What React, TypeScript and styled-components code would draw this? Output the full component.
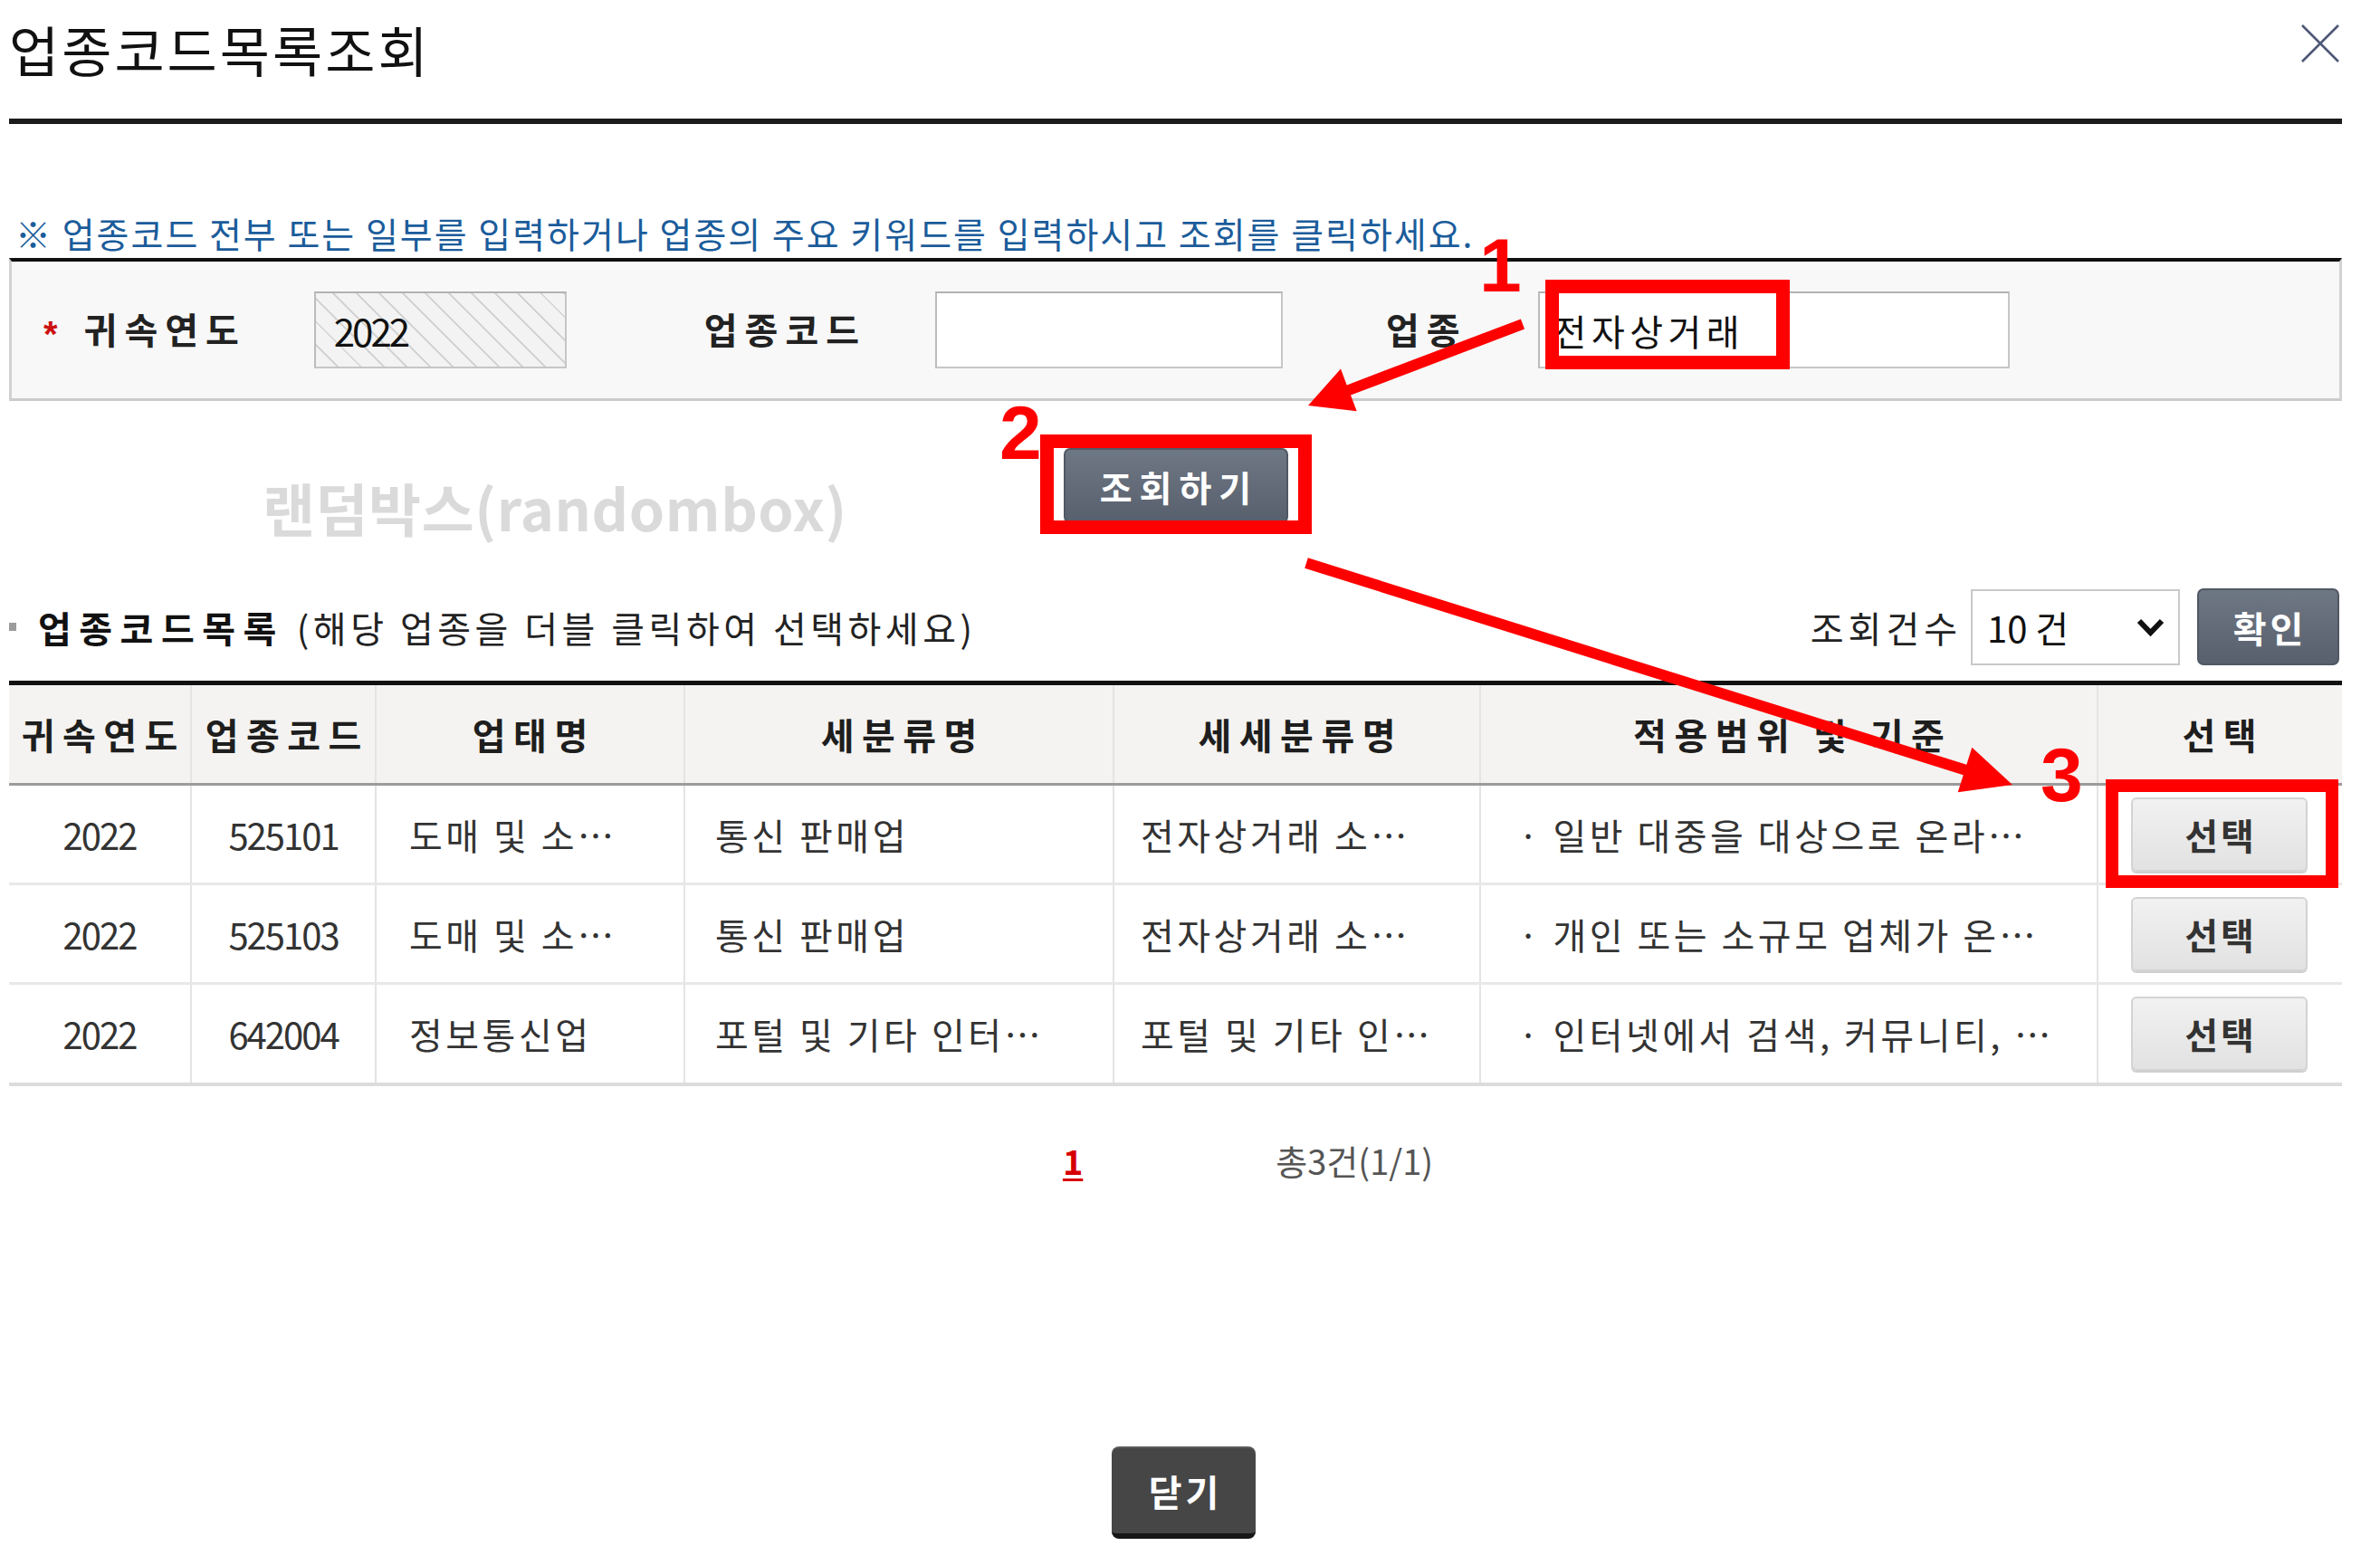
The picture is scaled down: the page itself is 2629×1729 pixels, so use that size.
import React from "react";
import styled, { createGlobalStyle } from "styled-components";

const KR = `"Noto Sans CJK KR", "Noto Sans", sans-serif`;

const GlobalStyle = createGlobalStyle`
  html, body {
    margin: 0;
    padding: 0;
    background: #ffffff;
  }
  body {
    font-family: ${KR};
    color: #333;
  }
  * {
    box-sizing: border-box;
  }
`;

const Page = styled.div`
  position: relative;
  width: 2629px;
  height: 1729px;
  padding: 0 42px 0 10px;
  overflow: hidden;
`;

const Header = styled.header`
  display: flex;
  justify-content: space-between;
  align-items: flex-start;
  height: 137px;
  padding-top: 24px;
  border-bottom: 6px solid #1c1c1c;
`;

const Title = styled.h1`
  margin: 0;
  font-size: 60px;
  line-height: 60px;
  font-weight: 400;
  color: #111;
  letter-spacing: 3px;
`;

const CloseIcon = styled.svg`
  margin-top: 3px;
  margin-right: 3px;
`;

const Notice = styled.p`
  margin: 101px 0 8px;
  padding-left: 7px;
  font-size: 39px;
  line-height: 39px;
  letter-spacing: 2px;
  color: #1b5c9b;
  white-space: nowrap;
`;

const SearchBox = styled.div`
  display: flex;
  align-items: center;
  height: 158px;
  padding-left: 35px;
  background: #f8f8f8;
  border-top: 4px solid #111;
  border-left: 3px solid #d2d2d2;
  border-right: 3px solid #d2d2d2;
  border-bottom: 3px solid #cbcbcb;
`;

const Star = styled.span`
  margin-top: 8px;
  font-family: "Liberation Sans", Arial, sans-serif;
  font-weight: 700;
  font-size: 40px;
  line-height: 40px;
  color: #cc1010;
`;

const FieldLabel = styled.span<{ $ml: number }>`
  margin-left: ${(p) => p.$ml}px;
  margin-top: -4px;
  font-size: 40px;
  line-height: 40px;
  font-weight: 700;
  letter-spacing: 8px;
  color: #222;
  white-space: nowrap;
`;

const TextField = styled.div<{ $ml: number; $w: number; $hatch?: boolean }>`
  display: flex;
  align-items: center;
  margin-left: ${(p) => p.$ml}px;
  width: ${(p) => p.$w}px;
  height: 85px;
  padding-left: ${(p) => (p.$hatch ? 20 : 15)}px;
  border: 2px solid #c6c6c6;
  border-top-color: #b2b2b2;
  border-left-color: #bcbcbc;
  background: ${(p) =>
    p.$hatch
      ? "repeating-linear-gradient(45deg, #f3f3f3 0 16px, #d4d4d4 16px 18px)"
      : "#ffffff"};
  color: #111;
  font-size: ${(p) => (p.$hatch ? 42 : 40)}px;
  letter-spacing: ${(p) => (p.$hatch ? -3 : 5.5)}px;
  white-space: nowrap;
`;

const ActionRow = styled.div`
  display: grid;
  grid-template-columns: 1fr auto 1fr;
  height: 83px;
  margin-top: 52px;
`;

const Watermark = styled.span`
  align-self: start;
  margin-left: 280px;
  margin-top: 33px;
  font-size: 63px;
  line-height: 64px;
  font-weight: 700;
  letter-spacing: 0.6px;
  color: #dadada;
  white-space: nowrap;
`;

const DarkButton = styled.button<{ $w: number; $h: number }>`
  display: flex;
  align-items: center;
  justify-content: center;
  width: ${(p) => p.$w}px;
  height: ${(p) => p.$h}px;
  padding: 0;
  border: 2px solid #515864;
  border-radius: 7px;
  background: linear-gradient(#6e7784, #59606d);
  color: #fff;
  font-family: ${KR};
  font-weight: 700;
  font-size: 39px;
  letter-spacing: 8px;
  text-indent: 8px;
  cursor: pointer;
`;

const ListBar = styled.div`
  display: flex;
  align-items: center;
  justify-content: space-between;
  height: 85px;
  margin-top: 72px;
  margin-bottom: 17px;
  padding-right: 3px;
`;

const ListTitleGroup = styled.div`
  display: flex;
  align-items: center;
  white-space: nowrap;
`;

const Bullet = styled.span`
  width: 8px;
  height: 9px;
  margin-right: 24px;
  background: #9c9c9c;
`;

const ListTitle = styled.span`
  font-size: 40px;
  line-height: 40px;
  font-weight: 700;
  letter-spacing: 8.5px;
  color: #111;
`;

const ListHint = styled.span`
  margin-left: 14px;
  font-size: 40px;
  line-height: 40px;
  letter-spacing: 4.5px;
  color: #222;
`;

const CountGroup = styled.div`
  display: flex;
  align-items: center;
`;

const CountLabel = styled.span`
  font-size: 40px;
  letter-spacing: 5px;
  color: #222;
`;

const SelectBox = styled.div`
  display: flex;
  align-items: center;
  justify-content: space-between;
  width: 231px;
  height: 84px;
  margin-left: 10px;
  padding: 0 15px 0 16px;
  border: 2px solid #c9c9c9;
  background: #fff;
  font-size: 40px;
  color: #111;
`;

const ConfirmButton = styled(DarkButton)`
  margin-left: 19px;
  font-size: 40px;
  letter-spacing: 4px;
  text-indent: 4px;
`;

const Table = styled.div`
  border-top: 5px solid #111;
`;

const Row = styled.div<{ $head?: boolean; $h: number; $last?: boolean }>`
  display: grid;
  grid-template-columns: 200px 204px 341px 474px 405px 682px 269px;
  height: ${(p) => p.$h}px;
  background: ${(p) => (p.$head ? "#f4f3f1" : "#fff")};
  border-bottom: ${(p) =>
    p.$head ? "3px solid #9b9b9b" : p.$last ? "4px solid #dcdcdc" : "3px solid #e8e8e8"};
`;

const Cell = styled.div<{ $head?: boolean; $pad?: number; $num?: boolean }>`
  display: flex;
  align-items: center;
  justify-content: ${(p) => (p.$pad === undefined ? "center" : "flex-start")};
  padding-left: ${(p) => p.$pad ?? 0}px;
  border-left: 2px solid #e4e4e4;
  font-size: 40px;
  line-height: 40px;
  font-weight: ${(p) => (p.$head ? 700 : 400)};
  letter-spacing: ${(p) => (p.$head ? 8.5 : p.$num ? -2 : 3.5)}px;
  text-indent: ${(p) => (p.$head ? 8.5 : 0)}px;
  color: ${(p) => (p.$head ? "#1e1e1e" : "#333")};
  white-space: nowrap;
  overflow: hidden;

  &:first-child {
    border-left: none;
  }
`;

const PickButton = styled.button`
  width: 195px;
  height: 82px;
  padding: 0;
  border: 2px solid #d3d3d3;
  border-radius: 6px;
  background: linear-gradient(#f1f1f1, #e2e2e2);
  box-shadow: 0 2px 0 #cfcfcf;
  color: #333;
  font-family: ${KR};
  font-weight: 700;
  font-size: 40px;
  letter-spacing: 3px;
  text-indent: 3px;
  cursor: pointer;
`;

const Pager = styled.div`
  display: flex;
  justify-content: center;
  align-items: center;
  gap: 213px;
  height: 50px;
  margin-top: 56px;
  padding-left: 160px;
`;

const PageNum = styled.a`
  font-size: 38px;
  font-weight: 700;
  color: #d70000;
  text-decoration: underline;
  text-decoration-thickness: 3px;
  text-underline-offset: 4px;
`;

const PageTotal = styled.span`
  font-size: 38px;
  letter-spacing: 0;
  color: #555;
`;

const Footer = styled.div`
  display: flex;
  justify-content: center;
  margin-top: 292px;
  padding-left: 18px;
`;

const CloseButton = styled.button`
  width: 159px;
  height: 102px;
  padding: 0;
  border: none;
  border-top: 2px solid #5a5a5a;
  border-bottom: 6px solid #171717;
  border-radius: 8px;
  background: #464646;
  color: #fff;
  font-family: ${KR};
  font-weight: 700;
  font-size: 40px;
  letter-spacing: 4px;
  text-indent: 4px;
  cursor: pointer;
`;

const Overlay = styled.svg`
  position: absolute;
  left: 0;
  top: 0;
  pointer-events: none;
`;

const Marker = styled.span<{ $x: number; $y: number }>`
  position: absolute;
  left: ${(p) => p.$x}px;
  top: ${(p) => p.$y}px;
  font-family: "Liberation Sans", Arial, sans-serif;
  font-weight: 700;
  font-size: 84px;
  line-height: 1;
  color: #ff0000;
  pointer-events: none;
`;

const arrowPoints = (
  x1: number,
  y1: number,
  x2: number,
  y2: number,
  w: number,
  len: number,
  half: number
) => {
  const dx = x2 - x1;
  const dy = y2 - y1;
  const d = Math.hypot(dx, dy);
  const ux = dx / d;
  const uy = dy / d;
  const px = -uy;
  const py = ux;
  const bx = x2 - ux * len;
  const by = y2 - uy * len;
  const pts = [
    [x1 + (px * w) / 2, y1 + (py * w) / 2],
    [bx + (px * w) / 2, by + (py * w) / 2],
    [bx + px * half, by + py * half],
    [x2, y2],
    [bx - px * half, by - py * half],
    [bx - (px * w) / 2, by - (py * w) / 2],
    [x1 - (px * w) / 2, y1 - (py * w) / 2],
  ];
  return pts.map((p) => p.map((n) => n.toFixed(1)).join(",")).join(" ");
};

const rows = [
  {
    year: "2022",
    code: "525101",
    type: "도매 및 소…",
    sub: "통신 판매업",
    subsub: "전자상거래 소…",
    scope: "일반 대중을 대상으로 온라…",
  },
  {
    year: "2022",
    code: "525103",
    type: "도매 및 소…",
    sub: "통신 판매업",
    subsub: "전자상거래 소…",
    scope: "개인 또는 소규모 업체가 온…",
  },
  {
    year: "2022",
    code: "642004",
    type: "정보통신업",
    sub: "포털 및 기타 인터…",
    subsub: "포털 및 기타 인…",
    scope: "인터넷에서 검색, 커뮤니티, …",
  },
];

const headers = ["귀속연도", "업종코드", "업태명", "세분류명", "세세분류명", "적용범위 및 기준", "선택"];

export default function App() {
  return (
    <Page>
      <GlobalStyle />
      <Header>
        <Title>업종코드목록조회</Title>
        <CloseIcon width="42" height="42" viewBox="0 0 42 42">
          <path d="M1 1 L41 41 M41 1 L1 41" stroke="#4d5876" strokeWidth="2.6" fill="none" />
        </CloseIcon>
      </Header>

      <Notice>※ 업종코드 전부 또는 일부를 입력하거나 업종의 주요 키워드를 입력하시고 조회를 클릭하세요.</Notice>

      <SearchBox>
        <Star>*</Star>
        <FieldLabel $ml={29}>귀속연도</FieldLabel>
        <TextField $ml={75} $w={279} $hatch>
          2022
        </TextField>
        <FieldLabel $ml={152}>업종코드</FieldLabel>
        <TextField $ml={76} $w={384} />
        <FieldLabel $ml={114}>업종</FieldLabel>
        <TextField $ml={78} $w={521}>
          전자상거래
        </TextField>
      </SearchBox>

      <ActionRow>
        <Watermark>랜덤박스(randombox)</Watermark>
        <DarkButton $w={248} $h={83}>
          조회하기
        </DarkButton>
      </ActionRow>

      <ListBar>
        <ListTitleGroup>
          <Bullet />
          <ListTitle>업종코드목록</ListTitle>
          <ListHint>(해당 업종을 더블 클릭하여 선택하세요)</ListHint>
        </ListTitleGroup>
        <CountGroup>
          <CountLabel>조회건수</CountLabel>
          <SelectBox>
            <span>10 건</span>
            <svg width="31" height="20" viewBox="0 0 31 20">
              <path d="M3 3 L15.5 16 L28 3" stroke="#111" strokeWidth="6" fill="none" />
            </svg>
          </SelectBox>
          <ConfirmButton $w={157} $h={85}>
            확인
          </ConfirmButton>
        </CountGroup>
      </ListBar>

      <Table>
        <Row $head $h={111}>
          {headers.map((h) => (
            <Cell key={h} $head>
              {h}
            </Cell>
          ))}
        </Row>
        {rows.map((r, i) => (
          <Row key={r.code} $h={i === 2 ? 112 : 110} $last={i === 2}>
            <Cell $num>{r.year}</Cell>
            <Cell $num>{r.code}</Cell>
            <Cell $pad={36}>{r.type}</Cell>
            <Cell $pad={33}>{r.sub}</Cell>
            <Cell $pad={29}>{r.subsub}</Cell>
            <Cell $pad={41}>· {r.scope}</Cell>
            <Cell>
              <PickButton>선택</PickButton>
            </Cell>
          </Row>
        ))}
      </Table>

      <Pager>
        <PageNum>1</PageNum>
        <PageTotal>총3건(1/1)</PageTotal>
      </Pager>

      <Footer>
        <CloseButton>닫기</CloseButton>
      </Footer>

      <Overlay width="2629" height="1729" viewBox="0 0 2629 1729">
        <g fill="none" stroke="#ff0000">
          <rect x="1714.5" y="316.5" width="255" height="84" strokeWidth="15" />
          <rect x="1156.5" y="487.5" width="285" height="95" strokeWidth="15" />
          <rect x="2333" y="868" width="243" height="106" strokeWidth="14" />
        </g>
        <g fill="#ff0000">
          <polygon points={arrowPoints(1682, 358, 1445, 448, 12, 48, 25)} />
          <polygon points={arrowPoints(1443, 622, 2223, 867, 12, 55, 26)} />
        </g>
      </Overlay>
      <Marker $x={1634} $y={251}>1</Marker>
      <Marker $x={1104} $y={436}>2</Marker>
      <Marker $x={2254} $y={814}>3</Marker>
    </Page>
  );
}
